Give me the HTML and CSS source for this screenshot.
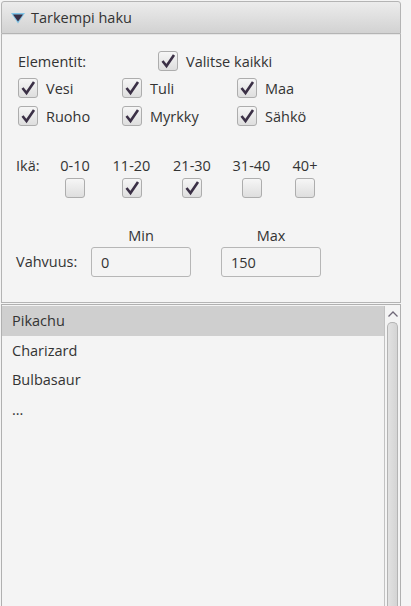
FILE: index.html
```html
<!DOCTYPE html>
<html>
<head>
<meta charset="utf-8">
<link rel="stylesheet" href="styles.css">
</head>
<body>
<div class="app">
  <div class="tp-header">
    <svg class="arrow" width="16" height="14" viewBox="0 0 16 14">
      <polygon points="1,2 15,2 8,12.5" fill="#7fc3e6"/>
      <polygon points="3,3.5 13,3.5 8,10.5" fill="#3a2f45"/>
    </svg>
    <span class="tp-title">Tarkempi haku</span>
  </div>
  <div class="tp-content">
    <div class="row-all">
      <span class="lbl-elements">Elementit:</span>
      <label class="cb"><span class="box checked"><svg viewBox="0 0 20 20"><path d="M4.5 10 L8.5 15 L16 4"/></svg></span><span>Valitse kaikki</span></label>
    </div>
    <div class="elements">
      <label class="cb"><span class="box checked"><svg viewBox="0 0 20 20"><path d="M4.5 10 L8.5 15 L16 4"/></svg></span><span>Vesi</span></label>
      <label class="cb"><span class="box checked"><svg viewBox="0 0 20 20"><path d="M4.5 10 L8.5 15 L16 4"/></svg></span><span>Tuli</span></label>
      <label class="cb"><span class="box checked"><svg viewBox="0 0 20 20"><path d="M4.5 10 L8.5 15 L16 4"/></svg></span><span>Maa</span></label>
      <label class="cb"><span class="box checked"><svg viewBox="0 0 20 20"><path d="M4.5 10 L8.5 15 L16 4"/></svg></span><span>Ruoho</span></label>
      <label class="cb"><span class="box checked"><svg viewBox="0 0 20 20"><path d="M4.5 10 L8.5 15 L16 4"/></svg></span><span>Myrkky</span></label>
      <label class="cb"><span class="box checked"><svg viewBox="0 0 20 20"><path d="M4.5 10 L8.5 15 L16 4"/></svg></span><span>Sähkö</span></label>
    </div>
    <div class="age">
      <span class="age-lbl">Ikä:</span>
      <div class="age-col c1"><span>0-10</span><span class="box"></span></div>
      <div class="age-col c2"><span>11-20</span><span class="box checked"><svg viewBox="0 0 20 20"><path d="M4.5 10 L8.5 15 L16 4"/></svg></span></div>
      <div class="age-col c3"><span>21-30</span><span class="box checked"><svg viewBox="0 0 20 20"><path d="M4.5 10 L8.5 15 L16 4"/></svg></span></div>
      <div class="age-col c4"><span>31-40</span><span class="box"></span></div>
      <div class="age-col c5"><span>40+</span><span class="box"></span></div>
    </div>
    <div class="strength">
      <span></span>
      <span class="col-lbl">Min</span>
      <span></span>
      <span class="col-lbl">Max</span>
      <span class="str-lbl">Vahvuus:</span>
      <div class="field">0</div>
      <span></span>
      <div class="field">150</div>
    </div>
  </div>
  <div class="list">
    <div class="rows">
      <div class="item selected">Pikachu</div>
      <div class="item">Charizard</div>
      <div class="item">Bulbasaur</div>
      <div class="item">...</div>
    </div>
    <div class="scrollbar">
      <div class="sb-up"><svg width="12" height="8" viewBox="0 0 12 8"><path d="M1.5 6.5 L6 2 L10.5 6.5" fill="none" stroke="#6f6878" stroke-width="1.3"/></svg></div>
      <div class="thumb"></div>
    </div>
  </div>
</div>
</body>
</html>
```
FILE: styles.css
```css
html, body {
  margin: 0;
  padding: 0;
  background: #f4f4f4;
  height: 100%;
  overflow: hidden;
}
body {
  font-family: "Open Sans", "Noto Sans", sans-serif;
  font-size: 14.5px;
  color: #333333;
  white-space: nowrap;
}
.app {
  margin-left: 1px;
  padding-top: 1px;
  width: 400px;
  height: 605px;
  display: flex;
  flex-direction: column;
}
.tp-header {
  height: 33px;
  box-sizing: border-box;
  border: 1px solid #b4b4b4;
  border-radius: 3px 3px 0 0;
  background: linear-gradient(#ececec, #d2d2d2);
  display: flex;
  align-items: center;
  padding-left: 8px;
  gap: 5px;
  flex: none;
}
.arrow { display: block; margin-top: 1px; }
.tp-title { line-height: 20px; }
.tp-content {
  height: 269px;
  box-sizing: border-box;
  border: 1px solid #b4b4b4;
  border-top: none;
  box-shadow: inset 0 1px 0 #e6e6e6;
  padding: 17px 0 0 16px;
  flex: none;
}
.row-all {
  display: flex;
  align-items: center;
  height: 20px;
}
.lbl-elements { width: 140px; }
.cb {
  display: flex;
  align-items: center;
  gap: 8px;
  height: 20px;
}
.box {
  width: 20px;
  height: 20px;
  box-sizing: border-box;
  border: 1px solid #adadad;
  border-radius: 3px;
  background: linear-gradient(#f6f6f6, #dedede);
  display: block;
  position: relative;
  flex: none;
}
.box svg {
  position: absolute;
  left: -1px;
  top: -1px;
  width: 20px;
  height: 20px;
}
.box path {
  fill: none;
  stroke: #3b3046;
  stroke-width: 2.6;
  stroke-linecap: butt;
  stroke-linejoin: miter;
}
.elements {
  display: grid;
  grid-template-columns: 104px 115px 100px;
  row-gap: 8px;
  margin-top: 7px;
}
.age {
  display: flex;
  gap: 22px;
  margin-top: 30px;
  margin-left: -2px;
}
.age-lbl { width: 22px; line-height: 20px; }
.age-col {
  display: flex;
  flex-direction: column;
  align-items: center;
  gap: 2px;
  line-height: 20px;
}
.c1 { width: 30px; }
.c2 { width: 39px; }
.c3 { width: 38px; }
.c4 { width: 37px; }
.c5 { width: 26px; }
.strength {
  display: grid;
  grid-template-columns: 75px 100px 30px 100px;
  row-gap: 1px;
  margin-top: 28px;
  margin-left: -2px;
  align-items: center;
}
.col-lbl { text-align: center; line-height: 20px; }
.str-lbl { line-height: 20px; }
.field {
  height: 30px;
  box-sizing: border-box;
  border: 1px solid #b6b6b6;
  border-radius: 3px;
  background: #f4f4f4;
  padding-left: 9px;
  display: flex;
  align-items: center;
}
.list {
  flex: 1;
  margin-top: 1px;
  border: 1px solid #b0b0b0;
  border-bottom: none;
  display: flex;
  padding-top: 1px;
}
.rows { flex: 1; }
.item {
  height: 29.5px;
  line-height: 29.5px;
  padding-left: 10px;
}
.item.selected {
  background: #cfcfcf;
}
.scrollbar {
  width: 15px;
  border-left: 1px solid #c2c2c2;
  display: flex;
  flex-direction: column;
  align-items: center;
}
.sb-up {
  height: 15px;
  display: flex;
  align-items: center;
  justify-content: center;
}
.thumb {
  flex: 1;
  width: 11px;
  box-sizing: border-box;
  border: 1px solid #b4b4b4;
  border-bottom: none;
  border-radius: 5px 5px 0 0;
  background: linear-gradient(90deg, #e2e2e2, #d4d4d4);
  margin-top: 1px;
}
```
